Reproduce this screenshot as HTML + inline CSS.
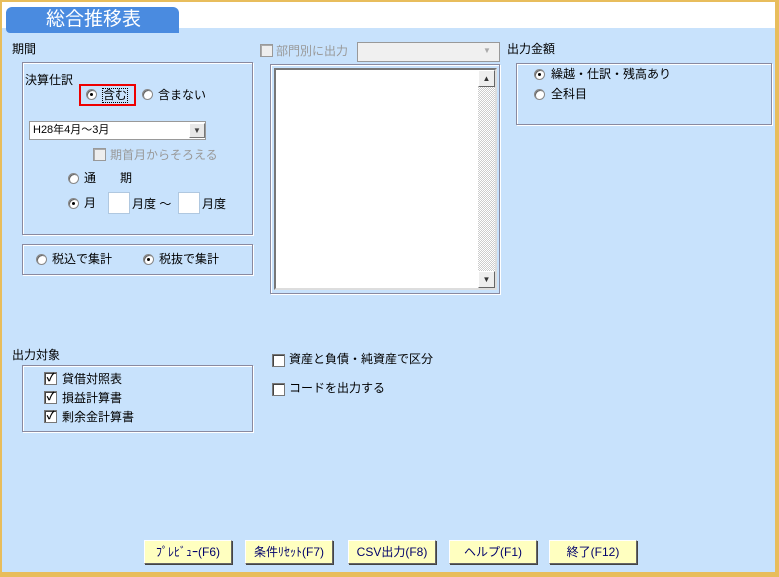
<!DOCTYPE html>
<html><head><meta charset="utf-8"><style>
*{margin:0;padding:0;box-sizing:border-box}
body{width:779px;height:577px;overflow:hidden;background:#e8bd5c;font-family:"Liberation Sans","Noto Sans CJK JP",sans-serif;font-size:12px;color:#000;line-height:1}
#f{position:absolute;left:2px;top:2px;width:773px;height:570px;background:#c8e2fc}
.a{position:absolute;white-space:nowrap}
.grp{position:absolute;border:1px solid #8a8aa0;box-shadow:1px 1px 0 #fff, inset 1px 1px 0 #fff}
.rb{position:absolute;width:11px;height:11px;border-radius:50%;background:#fff;border:1px solid #888;box-shadow:inset 1px 1px 0 #666}
.rb.on::after{content:"";position:absolute;left:3px;top:3px;width:3px;height:3px;background:#000;border-radius:50%}
.cb{position:absolute;width:13px;height:13px;background:#fff;border:1px solid #777;box-shadow:inset 1px 1px 0 #444;font-size:11px;line-height:11px;text-align:center;font-weight:bold}
.cb.dis{background:#eee;border-color:#999;box-shadow:inset 1px 1px 0 #aaa}
.btn{position:absolute;top:538px;height:24px;background:#ffffc0;border:1px solid;border-color:#fff #666 #666 #fff;box-shadow:1px 1px 0 #444;color:#00006b;text-align:center;line-height:22px;font-size:12px}
.in{position:absolute;width:22px;height:22px;background:#fff;border:1px solid #b0c8e0}
</style></head><body>
<div id="f">
<div class="a" style="left:0;top:0;width:773px;height:26px;background:#fff"></div>
<div class="a" style="left:0;top:26px;width:773px;height:2px;background:#c8e2fc"></div>
<div class="a" style="left:0;top:29px;width:773px;height:1px;background:#c8e2fc"></div>
<div class="a" style="left:0;top:31px;width:773px;height:1px;background:#c8e2fc"></div>
<div class="a" style="left:4px;top:5px;width:173px;height:26px;background:#4a8be0;border-radius:6px 6px 0 4px;color:#fff;font-size:19px;line-height:25px;padding-left:40px">総合推移表</div>

<div class="a" style="left:10px;top:41px">期間</div>
<div class="grp" style="left:20px;top:60px;width:231px;height:173px"></div>
<div class="a" style="left:23px;top:72px">決算仕訳</div>
<div class="a" style="left:77px;top:82px;width:57px;height:22px;border:2px solid #e00"></div>
<div class="rb on" style="left:84px;top:87px"></div>
<div class="a" style="left:100px;top:86px;border:1px dotted #000;line-height:13px">含む</div>
<div class="rb" style="left:140px;top:87px"></div>
<div class="a" style="left:156px;top:87px">含まない</div>
<div class="a" style="left:27px;top:119px;width:177px;height:19px;background:#fff;border:1px solid #999;font-size:11px;line-height:17px;padding-left:3px">H28年4月～3月</div>
<div class="a" style="left:187px;top:121px;width:16px;height:15px;background:#e8e8e8;border:1px solid;border-color:#fff #777 #777 #fff;font-size:8px;line-height:13px;text-align:center;color:#444">▼</div>
<div class="cb dis" style="left:91px;top:146px"></div>
<div class="a" style="left:108px;top:147px;color:#999">期首月からそろえる</div>
<div class="rb" style="left:66px;top:171px"></div>
<div class="a" style="left:82px;top:170px">通　　期</div>
<div class="rb on" style="left:66px;top:196px"></div>
<div class="a" style="left:82px;top:195px">月</div>
<div class="in" style="left:106px;top:190px"></div>
<div class="a" style="left:130px;top:196px">月度 ～</div>
<div class="in" style="left:176px;top:190px"></div>
<div class="a" style="left:200px;top:196px">月度</div>

<div class="grp" style="left:20px;top:242px;width:231px;height:31px"></div>
<div class="rb" style="left:34px;top:252px"></div>
<div class="a" style="left:50px;top:251px">税込で集計</div>
<div class="rb on" style="left:141px;top:252px"></div>
<div class="a" style="left:157px;top:251px">税抜で集計</div>

<div class="cb dis" style="left:258px;top:42px"></div>
<div class="a" style="left:274px;top:43px;color:#999">部門別に出力</div>
<div class="a" style="left:355px;top:40px;width:143px;height:20px;background:#f0f0f0;border:1px solid #999"></div>
<div class="a" style="left:481px;top:45px;color:#aaa;font-size:8px">▼</div>
<div class="grp" style="left:268px;top:62px;width:230px;height:230px"></div>
<div class="a" style="left:272px;top:66px;width:223px;height:222px;background:#fff;border:2px solid;border-color:#777 #ddd #ddd #777"></div>
<div class="a" style="left:476px;top:68px;width:17px;height:218px;background:repeating-conic-gradient(#ccc 0 25%,#fff 0 50%) 0 0/2px 2px"></div>
<div class="a" style="left:476px;top:68px;width:17px;height:17px;background:#eee;border:1px solid;border-color:#fff #666 #666 #fff;font-size:8px;text-align:center;line-height:15px;color:#333">▲</div>
<div class="a" style="left:476px;top:269px;width:17px;height:17px;background:#eee;border:1px solid;border-color:#fff #666 #666 #fff;font-size:8px;text-align:center;line-height:15px;color:#333">▼</div>

<div class="a" style="left:505px;top:41px">出力金額</div>
<div class="grp" style="left:514px;top:61px;width:256px;height:62px"></div>
<div class="rb on" style="left:532px;top:67px"></div>
<div class="a" style="left:549px;top:66px">繰越・仕訳・残高あり</div>
<div class="rb" style="left:532px;top:87px"></div>
<div class="a" style="left:549px;top:86px">全科目</div>

<div class="a" style="left:10px;top:347px">出力対象</div>
<div class="grp" style="left:20px;top:363px;width:231px;height:67px"></div>
<div class="cb" style="left:42px;top:370px">✓</div>
<div class="a" style="left:60px;top:371px">貸借対照表</div>
<div class="cb" style="left:42px;top:389px">✓</div>
<div class="a" style="left:60px;top:390px">損益計算書</div>
<div class="cb" style="left:42px;top:408px">✓</div>
<div class="a" style="left:60px;top:409px">剰余金計算書</div>

<div class="cb" style="left:270px;top:352px"></div>
<div class="a" style="left:287px;top:351px">資産と負債・純資産で区分</div>
<div class="cb" style="left:270px;top:381px"></div>
<div class="a" style="left:287px;top:380px">コードを出力する</div>

<div class="btn" style="left:142px;width:88px">ﾌﾟﾚﾋﾞｭｰ(F6)</div>
<div class="btn" style="left:243px;width:88px">条件ﾘｾｯﾄ(F7)</div>
<div class="btn" style="left:346px;width:88px">CSV出力(F8)</div>
<div class="btn" style="left:447px;width:88px">ヘルプ(F1)</div>
<div class="btn" style="left:547px;width:88px">終了(F12)</div>
</div>
</body></html>
